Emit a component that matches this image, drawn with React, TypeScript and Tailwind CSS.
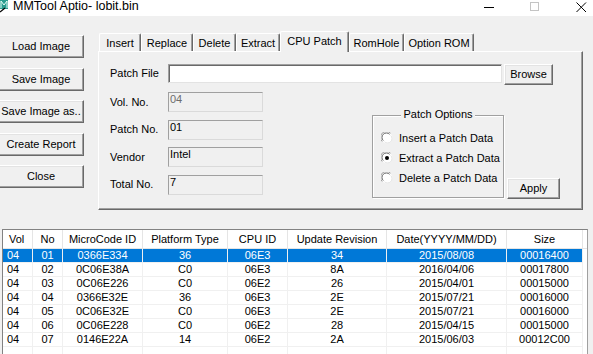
import React from "react";

const rows: string[][] = [
  ["04", "01", "0366E334", "36", "06E3", "34", "2015/08/08", "00016400"],
  ["04", "02", "0C06E38A", "C0", "06E3", "8A", "2016/04/06", "00017800"],
  ["04", "03", "0C06E226", "C0", "06E2", "26", "2015/04/01", "00015000"],
  ["04", "04", "0366E32E", "36", "06E3", "2E", "2015/07/21", "00016000"],
  ["04", "05", "0C06E32E", "C0", "06E3", "2E", "2015/07/21", "00016000"],
  ["04", "06", "0C06E228", "C0", "06E2", "28", "2015/04/15", "00015000"],
  ["04", "07", "0146E22A", "14", "06E2", "2A", "2015/06/03", "00012C00"],
];

const cols = [
  { t: "Vol", w: "w-[30px]", left: true },
  { t: "No", w: "w-[30px]" },
  { t: "MicroCode ID", w: "w-[80px]" },
  { t: "Platform Type", w: "w-[85px]" },
  { t: "CPU ID", w: "w-[60px]" },
  { t: "Update Revision", w: "w-[99px]" },
  { t: "Date(YYYY/MM/DD)", w: "w-[120px]" },
  { t: "Size", w: "w-[76px]" },
];

function Btn({ children, className = "" }: { children: React.ReactNode; className?: string }) {
  return (
    <div
      className={`flex items-center justify-center bg-[#f0f0f0] border border-t-white border-l-white border-r-[#696969] border-b-[#696969] shadow-[inset_-1px_-1px_0_#a0a0a0,inset_1px_1px_0_#e3e3e3] text-[11px] leading-[13px] text-black ${className}`}
    >
      {children}
    </div>
  );
}

function Tab({ label, w, selected = false }: { label: string; w: string; selected?: boolean }) {
  return (
    <div
      className={`${w} ${
        selected ? "h-[21px] mb-[-1px] relative z-10 pb-[2px]" : "h-[18px] pt-[1px]"
      } flex items-center justify-center bg-[#f0f0f0] border-t border-l border-r border-t-white border-l-white border-r-[#696969] shadow-[inset_-1px_0_0_#a0a0a0] rounded-t-[2px] text-[11px] leading-[13px] text-black`}
    >
      {label}
    </div>
  );
}

function Radio({ checked = false }: { checked?: boolean }) {
  return (
    <svg width="12" height="12" viewBox="0 0 12 12" className="shrink-0">
      <circle cx="6" cy="6" r="5.5" fill="white" />
      <path d="M1.2 9.5 A5.3 5.3 0 0 1 9.5 1.2" stroke="#a0a0a0" strokeWidth="1" fill="none" />
      <path d="M2.3 8.6 A4.2 4.2 0 0 1 8.6 2.3" stroke="#696969" strokeWidth="1" fill="none" />
      <path d="M2.5 10.8 A5.3 5.3 0 0 0 10.8 2.5" stroke="#f0f0f0" strokeWidth="1" fill="none" />
      <path d="M3.4 9.7 A4.2 4.2 0 0 0 9.7 3.4" stroke="#e3e3e3" strokeWidth="1" fill="none" />
      {checked && <circle cx="6" cy="6" r="2" fill="#000" />}
    </svg>
  );
}

function Field({ label, value, grey = false }: { label: string; value: string; grey?: boolean }) {
  return (
    <div className="flex items-center">
      <div className="w-[58px] text-[11px] leading-[13px] text-black">{label}</div>
      <div
        className={`w-[95px] h-[20px] bg-[#f0f0f0] border border-t-[#a0a0a0] border-l-[#a0a0a0] border-r-[#dadada] border-b-[#dadada] pl-[1px] text-[11px] leading-[13px] ${
          grey ? "text-[#6d6d6d]" : "text-black"
        }`}
      >
        {value}
      </div>
    </div>
  );
}

export default function App() {
  return (
    <div className="w-[593px] h-[354px] overflow-hidden bg-[#f0f0f0] font-['Liberation_Sans',Arial,sans-serif] text-black">
      {/* Title bar */}
      <div className="h-[16px] bg-white flex items-start relative">
        <svg width="9" height="13" viewBox="0 0 9 13" className="shrink-0">
          <rect x="0" y="0" width="8" height="9" fill="#2a9d8f" />
          <path d="M1 1 V8 M1 1 L4 5 L7 1 V8" stroke="#e8fff8" strokeWidth="1" fill="none" />
          <path d="M0 12 L5 8" stroke="#000" strokeWidth="1.3" />
        </svg>
        <span className="ml-[4px] mt-[-1px] text-[12.5px] leading-[14px] text-black">MMTool Aptio- lobit.bin</span>
        <div className="ml-auto flex items-start">
          <div className="w-[10px] h-[1px] bg-black mt-[7px]" />
          <div className="ml-[36px] mt-[2px] w-[9px] h-[9px] border border-[#c4c4c4]" />
          <svg width="11" height="11" viewBox="0 0 11 11" className="ml-[37px] mt-[2px]">
            <path d="M0.5 0.5 L10 10 M10 0.5 L0.5 10" stroke="#000" strokeWidth="1" />
          </svg>
          <div className="w-[6px]" />
        </div>
      </div>

      {/* Body */}
      <div className="flex">
        <div className="flex flex-col gap-[9.5px] pt-[19px] ml-[-2px]">
          <Btn className="w-[86px] h-[23px]">Load Image</Btn>
          <Btn className="w-[86px] h-[23px]">Save Image</Btn>
          <Btn className="w-[86px] h-[23px]">Save Image as..</Btn>
          <Btn className="w-[86px] h-[23px]">Create Report</Btn>
          <Btn className="w-[86px] h-[23px]">Close</Btn>
        </div>

        <div className="ml-[14px] pt-[15px] w-[485px]">
          <div className="flex items-end h-[20px] pl-[1px]">
            <Tab label="Insert" w="w-[42px]" />
            <Tab label="Replace" w="w-[52px]" />
            <Tab label="Delete" w="w-[43px]" />
            <Tab label="Extract" w="w-[44px]" />
            <Tab label="CPU Patch" w="w-[69px]" selected />
            <Tab label="RomHole" w="w-[55px]" />
            <Tab label="Option ROM" w="w-[70px]" />
          </div>
          <div className="h-[159px] border border-t-white border-l-white border-r-[#696969] border-b-[#696969] shadow-[inset_-1px_-1px_0_#a0a0a0] pt-[12px] pl-[11px]">
            <div className="flex items-start">
              <div className="w-[58px] h-[19px] flex items-center text-[11px] leading-[13px]">Patch File</div>
              <div className="w-[334px] h-[19px] bg-white border border-t-[#a0a0a0] border-l-[#a0a0a0] border-r-[#e3e3e3] border-b-[#e3e3e3] shadow-[inset_1px_1px_0_#696969]" />
              <Btn className="ml-[2px] w-[49px] h-[21px]">Browse</Btn>
            </div>
            <div className="flex mt-[7px]">
              <div className="flex flex-col gap-[7.5px]">
                <Field label="Vol. No." value="04" grey />
                <Field label="Patch No." value="01" />
                <Field label="Vendor" value="Intel" />
                <Field label="Total No." value="7" />
              </div>
              <div className="flex items-end ml-[109px] mt-[23px]">
                <div className="relative w-[132px] h-[83px] border border-[#a0a0a0] shadow-[1px_1px_0_white,inset_1px_1px_0_white] pt-[12px] pl-[8px]">
                  <div className="absolute top-[-8px] left-0 right-0 flex justify-center">
                    <span className="bg-[#f0f0f0] px-[2px] text-[11px] leading-[13px]">Patch Options</span>
                  </div>
                  <div className="flex flex-col">
                    <div className="h-[20px] flex items-center gap-[6px] text-[11px] leading-[13px]">
                      <Radio />
                      <span>Insert a Patch Data</span>
                    </div>
                    <div className="h-[20px] flex items-center gap-[6px] text-[11px] leading-[13px]">
                      <Radio checked />
                      <span>Extract a Patch Data</span>
                    </div>
                    <div className="h-[20px] flex items-center gap-[6px] text-[11px] leading-[13px]">
                      <Radio />
                      <span>Delete a Patch Data</span>
                    </div>
                  </div>
                </div>
                <Btn className="ml-[3px] mb-[-1px] w-[53px] h-[21px]">Apply</Btn>
              </div>
            </div>
          </div>
        </div>
      </div>

      {/* Table */}
      <div className="mt-[19px] ml-[2px] w-[586px] h-[130px] bg-white border-t border-l border-r border-t-[#828282] border-l-[#828282] border-r-[#a0a0a0] text-[11px] leading-[13px]">
        <div className="flex h-[19px] border-b border-[#e5e5e5]">
          {cols.map((c) => (
            <div
              key={c.t}
              className={`${c.w} shrink-0 h-full flex items-center border-r border-[#e5e5e5] ${
                c.left ? "justify-start pl-[6px]" : "justify-center"
              }`}
            >
              {c.t}
            </div>
          ))}
          <div className="flex-1" />
        </div>
        {rows.map((r, i) => (
          <div key={i} className={`flex h-[14px] ${i === 0 ? "bg-[#0078d7] text-white" : "text-black"}`}>
            {r.map((v, j) => (
              <div
                key={j}
                className={`${cols[j].w} shrink-0 h-full flex items-center border-r border-b border-[#f0f0f0] ${
                  cols[j].left ? "justify-start pl-[4px]" : "justify-center"
                }`}
              >
                {v}
              </div>
            ))}
            <div className="flex-1 bg-white" />
          </div>
        ))}
        <div className="flex h-[20px]">
          {cols.map((c) => (
            <div key={c.t} className={`${c.w} shrink-0 h-full border-r border-[#f0f0f0]`} />
          ))}
        </div>
      </div>
    </div>
  );
}
